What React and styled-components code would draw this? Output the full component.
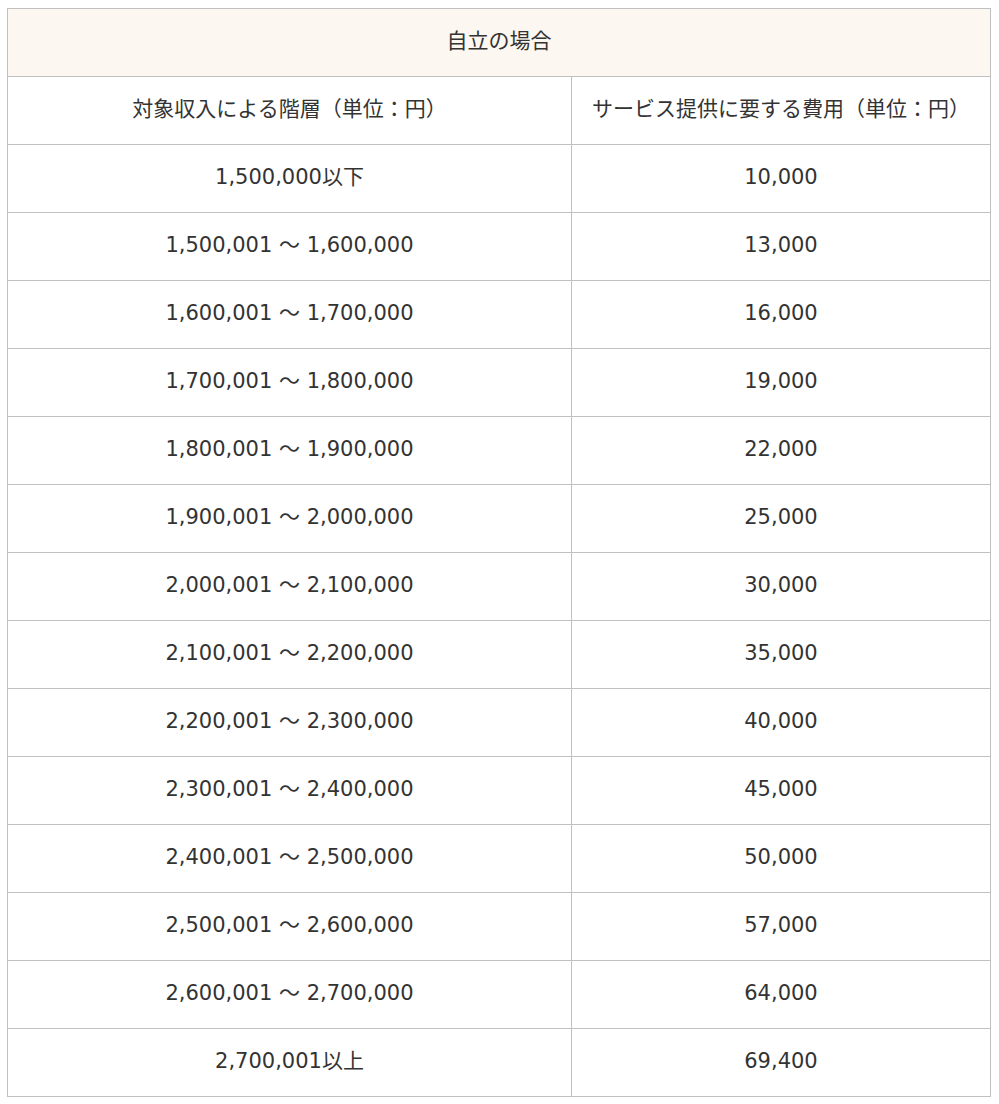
import styled, { createGlobalStyle } from "styled-components";

const GlobalStyle = createGlobalStyle`
  body {
    margin: 8px 7px 8px 7px;
    background: #fff;
    font-family: "DejaVu Sans", "Noto Sans CJK JP", sans-serif;
    color: #333;
  }
`;

const rows = [
  ["1,500,000以下", "10,000"],
  ["1,500,001 ～ 1,600,000", "13,000"],
  ["1,600,001 ～ 1,700,000", "16,000"],
  ["1,700,001 ～ 1,800,000", "19,000"],
  ["1,800,001 ～ 1,900,000", "22,000"],
  ["1,900,001 ～ 2,000,000", "25,000"],
  ["2,000,001 ～ 2,100,000", "30,000"],
  ["2,100,001 ～ 2,200,000", "35,000"],
  ["2,200,001 ～ 2,300,000", "40,000"],
  ["2,300,001 ～ 2,400,000", "45,000"],
  ["2,400,001 ～ 2,500,000", "50,000"],
  ["2,500,001 ～ 2,600,000", "57,000"],
  ["2,600,001 ～ 2,700,000", "64,000"],
  ["2,700,001以上", "69,400"],
];

const App = () => {
  return (
    <>
      <GlobalStyle />
      <FeeTable>
        <colgroup>
          <col style={{ width: "564px" }} />
          <col />
        </colgroup>
        <thead>
          <tr>
            <Cell as="th" colSpan={2} $head>
              自立の場合
            </Cell>
          </tr>
        </thead>
        <tbody>
          <tr>
            <Cell>対象収入による階層（単位：円）</Cell>
            <Cell>サービス提供に要する費用（単位：円）</Cell>
          </tr>
          {rows.map(([range, fee]) => (
            <tr key={range}>
              <Cell>{range}</Cell>
              <Cell>{fee}</Cell>
            </tr>
          ))}
        </tbody>
      </FeeTable>
    </>
  );
};
export default App;

const FeeTable = styled.table`
  width: 984px;
  border-collapse: collapse;
  table-layout: fixed;
  font-size: 21px;
  line-height: 26px;
`;

const Cell = styled.td`
  height: 68px;
  padding: 0 0 3px;
  box-sizing: border-box;
  border: 1px solid #c0c0c0;
  text-align: center;
  vertical-align: middle;
  font-weight: normal;
  color: #333;
  background: ${(p) => (p.$head ? "#fcf7f0" : "#fff")};
`;
